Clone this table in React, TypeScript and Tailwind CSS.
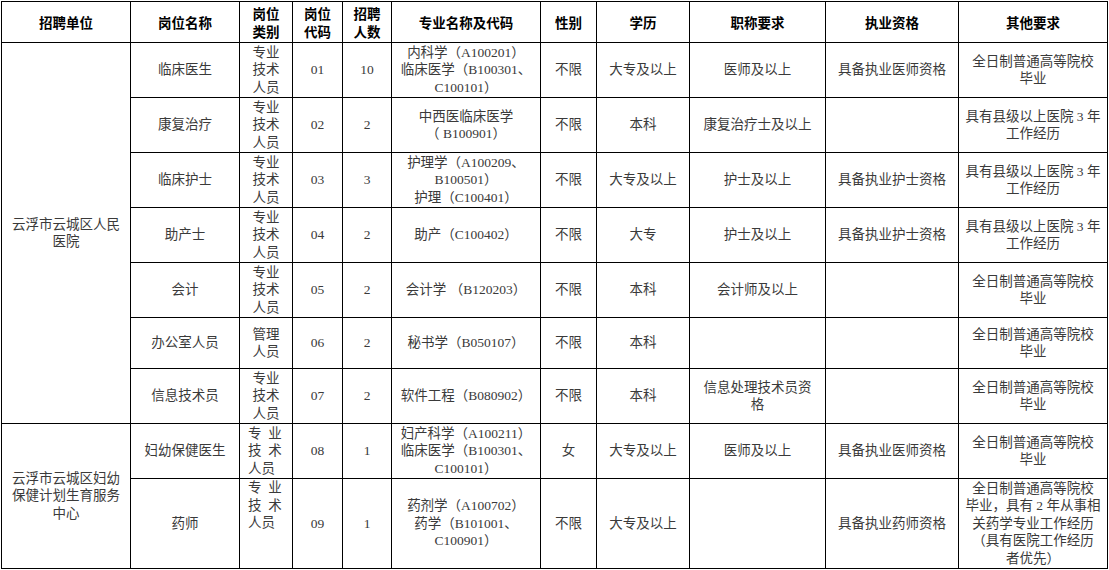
import React from "react";

type Row = {
  pos: string;
  cat: string[];
  catStyle?: "spaced" | "spacedTop";
  code: string;
  num: string;
  major: string[];
  sex: string;
  edu: string;
  title: string[];
  qual: string;
  other: string[];
  h: string;
};

const SP = "\u00a0\u00a0";

const rows: Row[] = [
  {
    pos: "临床医生",
    cat: ["专业", "技术", "人员"],
    code: "01",
    num: "10",
    major: ["内科学（A100201）", "临床医学（B100301、", "C100101）"],
    sex: "不限",
    edu: "大专及以上",
    title: ["医师及以上"],
    qual: "具备执业医师资格",
    other: ["全日制普通高等院校", "毕业"],
    h: "h-[55px]",
  },
  {
    pos: "康复治疗",
    cat: ["专业", "技术", "人员"],
    code: "02",
    num: "2",
    major: ["中西医临床医学", "（ B100901）"],
    sex: "不限",
    edu: "本科",
    title: ["康复治疗士及以上"],
    qual: "",
    other: ["具有县级以上医院 3 年", "工作经历"],
    h: "h-[55px]",
  },
  {
    pos: "临床护士",
    cat: ["专业", "技术", "人员"],
    code: "03",
    num: "3",
    major: ["护理学（A100209、", "B100501）", "护理（C100401）"],
    sex: "不限",
    edu: "大专及以上",
    title: ["护士及以上"],
    qual: "具备执业护士资格",
    other: ["具有县级以上医院 3 年", "工作经历"],
    h: "h-[55px]",
  },
  {
    pos: "助产士",
    cat: ["专业", "技术", "人员"],
    code: "04",
    num: "2",
    major: ["助产（C100402）"],
    sex: "不限",
    edu: "大专",
    title: ["护士及以上"],
    qual: "具备执业护士资格",
    other: ["具有县级以上医院 3 年", "工作经历"],
    h: "h-[55px]",
  },
  {
    pos: "会计",
    cat: ["专业", "技术", "人员"],
    code: "05",
    num: "2",
    major: ["会计学 （B120203）"],
    sex: "不限",
    edu: "本科",
    title: ["会计师及以上"],
    qual: "",
    other: ["全日制普通高等院校", "毕业"],
    h: "h-[55px]",
  },
  {
    pos: "办公室人员",
    cat: ["管理", "人员"],
    code: "06",
    num: "2",
    major: ["秘书学（B050107）"],
    sex: "不限",
    edu: "本科",
    title: [""],
    qual: "",
    other: ["全日制普通高等院校", "毕业"],
    h: "h-[51px]",
  },
  {
    pos: "信息技术员",
    cat: ["专业", "技术", "人员"],
    code: "07",
    num: "2",
    major: ["软件工程（B080902）"],
    sex: "不限",
    edu: "本科",
    title: ["信息处理技术员资", "格"],
    qual: "",
    other: ["全日制普通高等院校", "毕业"],
    h: "h-[55px]",
  },
  {
    pos: "妇幼保健医生",
    cat: ["专" + SP + "业", "技" + SP + "术", "人员"],
    catStyle: "spaced",
    code: "08",
    num: "1",
    major: ["妇产科学（A100211）", "临床医学（B100301、", "C100101）"],
    sex: "女",
    edu: "大专及以上",
    title: ["医师及以上"],
    qual: "具备执业医师资格",
    other: ["全日制普通高等院校", "毕业"],
    h: "h-[55px]",
  },
  {
    pos: "药师",
    cat: ["专" + SP + "业", "技" + SP + "术", "人员"],
    catStyle: "spacedTop",
    code: "09",
    num: "1",
    major: ["药剂学（A100702）", "药学（B101001、", "C100901）"],
    sex: "不限",
    edu: "大专及以上",
    title: [""],
    qual: "具备执业药师资格",
    other: [
      "全日制普通高等院校",
      "毕业，具有 2 年从事相",
      "关药学专业工作经历",
      "（具有医院工作经历",
      "者优先）",
    ],
    h: "h-[90px]",
  },
];

const cols = [129, 109, 53, 50, 49, 149, 56, 93, 136, 133, 149];

const Lines = ({ lines }: { lines: string[] }) => (
  <>
    {lines.map((l, i) => (
      <div key={i} className="whitespace-nowrap">
        {l || "\u00a0"}
      </div>
    ))}
  </>
);

const td = "border border-black px-1 py-0 text-center align-middle";
const th =
  "border border-black px-1 py-0 text-center align-middle font-bold text-black leading-[18px]";

export default function App() {
  return (
    <div className="bg-white w-[1109px] h-[570px] overflow-hidden pt-[1px] pl-[1px]">
      <table
        className="table-fixed border-collapse text-[13.5px] leading-[17.5px] text-[#3a3a3a]"
        style={{ width: 1106 }}
      >
        <colgroup>
          {cols.map((w, i) => (
            <col key={i} style={{ width: w }} />
          ))}
        </colgroup>
        <thead>
          <tr
            className="h-[41px]"
            style={{ fontFamily: '"Noto Sans CJK SC", sans-serif' }}
          >
            <th className={th}>招聘单位</th>
            <th className={th}>岗位名称</th>
            <th className={th}>
              <div>岗位</div>
              <div>类别</div>
            </th>
            <th className={th}>
              <div>岗位</div>
              <div>代码</div>
            </th>
            <th className={th}>
              <div>招聘</div>
              <div>人数</div>
            </th>
            <th className={th}>专业名称及代码</th>
            <th className={th}>性别</th>
            <th className={th}>学历</th>
            <th className={th}>职称要求</th>
            <th className={th}>执业资格</th>
            <th className={th}>其他要求</th>
          </tr>
        </thead>
        <tbody
          style={{
            fontFamily: '"Liberation Serif", "Noto Sans CJK SC", serif',
          }}
        >
          {rows.map((r, i) => (
            <tr key={i} className={r.h}>
              {i === 0 && (
                <td className={td} rowSpan={7}>
                  <Lines lines={["云浮市云城区人民", "医院"]} />
                </td>
              )}
              {i === 7 && (
                <td className={td} rowSpan={2}>
                  <Lines
                    lines={["云浮市云城区妇幼", "保健计划生育服务", "中心"]}
                  />
                </td>
              )}
              <td className={td}>{r.pos}</td>
              {r.catStyle ? (
                <td
                  className={
                    "border border-black py-0 pl-[8px] pr-0 text-left " +
                    (r.catStyle === "spacedTop" ? "align-top" : "align-middle")
                  }
                >
                  <Lines lines={r.cat} />
                </td>
              ) : (
                <td className={td}>
                  <Lines lines={r.cat} />
                </td>
              )}
              <td className={td}>{r.code}</td>
              <td className={td}>{r.num}</td>
              <td className={td}>
                <Lines lines={r.major} />
              </td>
              <td className={td}>{r.sex}</td>
              <td className={td}>{r.edu}</td>
              <td className={td}>
                <Lines lines={r.title} />
              </td>
              <td className={td}>{r.qual}</td>
              <td className={td}>
                <Lines lines={r.other} />
              </td>
            </tr>
          ))}
        </tbody>
      </table>
    </div>
  );
}
